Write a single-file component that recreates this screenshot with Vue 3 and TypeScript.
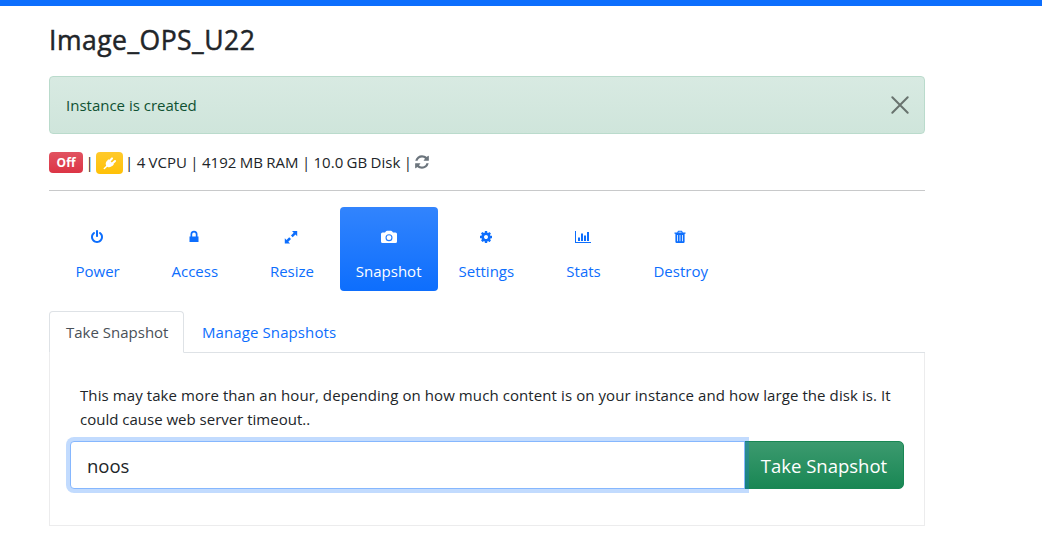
<script setup lang="ts">
import { ref } from 'vue'

interface Action {
  name: string
  icon: string
}

const actions: Action[] = [
  { name: 'Power', icon: 'power' },
  { name: 'Access', icon: 'lock' },
  { name: 'Resize', icon: 'resize' },
  { name: 'Snapshot', icon: 'camera' },
  { name: 'Settings', icon: 'cog' },
  { name: 'Stats', icon: 'chart' },
  { name: 'Destroy', icon: 'trash' },
]
const current = ref('Snapshot')
const snapshotName = ref('noos')
const showAlert = ref(true)
</script>

<template>
  <div class="topbar"></div>
  <main class="container">
    <h1>Image_OPS_U22</h1>

    <div v-if="showAlert" class="alert">
      <span class="alert-text">Instance is created</span>
      <button class="close" type="button" aria-label="Close" @click="showAlert = false">
        <svg width="16" height="16" viewBox="0 0 16 16"><path d="M.3.3l15.4 15.4M15.7.3L.3 15.7" stroke="#000" stroke-width="2" stroke-linecap="round" /></svg>
      </button>
    </div>

    <div class="status">
      <span class="badge off">Off</span>
      <span class="bar">|</span>
      <span class="badge plug">
        <svg width="14" height="14" viewBox="0 0 14 14" fill="#fff">
          <path d="M4.200 4.600l5.200 5.200c-1.500 1.500-3.500 1.900-5.200.9L1.600 13.200.7 12.900.6 12.200 3.200 9.700c-.9-1.600-.5-3.600 1-5.100z" />
          <path d="M5.500 5.900L9 2.400M8.300 8.600L12 5" stroke="#fff" stroke-width="2.100" stroke-linecap="round" />
          <path d="M4.200 4.600l1.300-1.300 5.300 5.300-1.400 1.300z" />
        </svg>
      </span>
      <span class="specs">| 4 VCPU | 4192 MB RAM | 10.0 GB Disk |</span>
      <svg class="refresh" width="16" height="16" viewBox="0 0 1792 1792" fill="#6c757d"><path d="M1639 1056q0 5-1 7-64 268-268 434.500t-478 166.500q-146 0-282.500-55t-243.500-157l-129 129q-19 19-45 19t-45-19-19-45v-448q0-26 19-45t45-19h448q26 0 45 19t19 45-19 45l-137 137q71 66 161 102t187 36q134 0 250-65t186-179q11-17 53-117 8-23 30-23h192q13 0 22.500 9.500t9.500 22.500zm25-800v448q0 26-19 45t-45 19h-448q-26 0-45-19t-19-45 19-45l138-138q-148-137-349-137-134 0-250 65t-186 179q-11 17-53 117-8 23-30 23h-199q-13 0-22.500-9.500t-9.500-22.500v-7q65-268 270-434.500t480-166.500q146 0 284 55.500t245 156.500l130-129q19-19 45-19t45 19 19 45z" /></svg>
    </div>

    <nav class="pills">
      <a v-for="a in actions" :key="a.name" class="pill" :class="[a.icon, { active: current === a.name }]" @click="current = a.name">
        <svg v-if="a.icon === 'power'" width="14" height="14" viewBox="0 0 1792 1792"><path d="M1664 896q0 156-61 298t-164 245-245 164-298 61-298-61-245-164-164-245-61-298q0-182 80.500-343t226.500-270q43-32 95.500-25t83.500 50q32 42 24.500 94.500t-49.500 84.500q-98 74-151.500 181t-53.500 228q0 104 40.500 198.500t109.500 163.500 163.500 109.500 198.500 40.500 198.500-40.500 163.500-109.500 109.500-163.500 40.500-198.500q0-121-53.500-228t-151.500-181q-42-32-49.500-84.500t24.500-94.500q31-43 84-50t95 25q146 109 226.500 270t80.500 343zm-640-768v640q0 52-38 90t-90 38-90-38-38-90v-640q0-52 38-90t90-38 90 38 38 90z" /></svg>
        <svg v-else-if="a.icon === 'lock'" width="14" height="14" viewBox="0 0 14 14"><path fill-rule="evenodd" d="M2.500 6.500V12h9V6.500h-1V4.200a3.500 3.500 0 0 0-7 0v2.300zM5.200 6.500V4.300a1.800 1.900 0 0 1 3.600 0v2.200z" /></svg>
        <svg v-else-if="a.icon === 'resize'" width="14" height="14" viewBox="0 0 14 14"><path d="M8 1h5.200v5.200L11.500 4.600 8.700 7.300 7 5.600 9.700 2.800zM6 13.500H.8V8.300l1.700 1.700 2.700-2.700L7 9 4.300 11.800z" /></svg>
        <svg v-else-if="a.icon === 'camera'" width="16" height="14" viewBox="0 0 16 14"><path fill-rule="evenodd" d="M1.500 2.500H4L5 1.200Q5.400.800 6 .8h4q.600 0 1 .4l1 1.300h2.500Q16 2.500 16 4v7.500Q16 13 14.500 13h-13Q0 13 0 11.500V4q0-1.500 1.500-1.500zM8 4.200a3.500 3.500 0 1 0 0 7 3.500 3.500 0 0 0 0-7zm0 1.100a2.400 2.400 0 1 1 0 4.800 2.400 2.400 0 0 1 0-4.800z" /></svg>
        <svg v-else-if="a.icon === 'cog'" width="14" height="14" viewBox="0 0 1792 1792"><path d="M1152 896q0-106-75-181t-181-75-181 75-75 181 75 181 181 75 181-75 75-181zm512-109v222q0 12-8 23t-20 13l-185 28q-19 54-39 91 35 50 107 138 10 12 10 25t-9 23q-27 37-99 108t-94 71q-12 0-26-9l-138-108q-44 23-91 38-16 136-29 186-7 28-36 28h-222q-14 0-24.500-8.500t-11.500-21.500l-28-184q-49-16-90-37l-141 107q-10 9-25 9-14 0-25-11-126-114-165-168-7-10-7-23 0-12 8-23 15-21 51-66.500t54-70.500q-27-50-41-99l-183-27q-13-2-21-12.500t-8-23.500v-222q0-12 8-23t19-13l186-28q14-46 39-92-40-57-107-138-10-12-10-24 0-10 9-23 26-36 98.500-107.500t94.500-71.500q13 0 26 10l138 107q44-23 91-38 16-136 29-186 7-28 36-28h222q14 0 24.500 8.500t11.500 21.500l28 184q49 16 90 37l142-107q9-9 24-9 13 0 25 10 129 119 165 170 7 8 7 22 0 12-8 23-15 21-51 66.500t-54 70.500q26 50 41 98l183 28q13 2 21 12.500t8 23.500z" /></svg>
        <svg v-else-if="a.icon === 'chart'" width="16" height="14" viewBox="0 0 16 14"><path d="M0 1h1v11h15v1H0zM3 7.500h2V11H3zM6 3.500h2V11H6zM9 5.500h2V11H9zM12 2h2v9h-2z" /></svg>
        <svg v-else width="14" height="14" viewBox="0 0 14 14"><path fill-rule="evenodd" d="M4.200 2.500l.7-1.500Q5 .8 5.300.8h3.400q.3 0 .4.200l.7 1.500h2.700v1.200h-.9v8q0 1.300-1.200 1.300H3.600q-1.200 0-1.200-1.300v-8h-.9V2.500zM5.300 2.500h3.400l-.4-.7H5.700zM4.200 5v6.300h.8V5zM6.600 5v6.300h.8V5zM9 5v6.300h.8V5z" /></svg>
        <span>{{ a.name }}</span>
      </a>
    </nav>

    <div class="tabs">
      <a class="tab selected">Take Snapshot</a>
      <a class="tab manage">Manage Snapshots</a>
    </div>
    <section class="panel">
      <p><span class="line1">This may take more than an hour, depending on how much content is on your instance and how large the disk is. It</span><br /><span class="line2">could cause web server timeout..</span></p>
      <div class="group">
        <input v-model="snapshotName" type="text" aria-label="Snapshot Name" spellcheck="false" />
        <button type="button" class="take"><span>Take Snapshot</span></button>
      </div>
    </section>
  </main>
</template>

<style>
body { background: #fff; overflow: hidden; }
</style>

<style scoped>
* { box-sizing: border-box; }
.topbar { height: 6px; background: #0d6efd; }
.container { margin-left: 49px; width: 876px; font: 15px/24px "Segoe UI", "Open Sans", sans-serif; color: #212529; }
h1 { margin: 0; padding-top: 17px; height: 70px; font-size: 26.500px; line-height: 34px; font-weight: 500; letter-spacing: .5px; -webkit-text-stroke: .5px #212529; }
.alert { height: 58px; padding: 0 16px; display: flex; align-items: center; justify-content: space-between; border: 1px solid #badbcc; border-radius: 4px; color: #0f5132; background: linear-gradient(#d8eae2, #cfe5db); }
.close { display: flex; padding: 0; border: 0; background: none; opacity: .5; }
.close svg { overflow: visible; }
.status { height: 57px; border-bottom: 1px solid #c8c9ca; display: flex; align-items: flex-start; padding-top: 16px; white-space: pre; }
.badge { height: 21px; margin-top: 2px; border-radius: 4px; color: #fff; display: flex; align-items: center; justify-content: center; }
.off { width: 34px; padding-top: 1px; font-size: 12px; font-weight: 700; background: linear-gradient(#e15361, #dc3545); }
.bar { width: 13px; text-align: center; }
.plug { width: 27px; height: 22px; background: linear-gradient(#ffca2c, #ffc107); }
.specs { flex: none; margin-left: 2px; width: 288px; word-spacing: -.500px; }
.refresh { flex: none; margin: 4px 0 0 1px; }
.pills { margin-top: 16px; display: grid; grid-template-columns: repeat(7, 97.200px); height: 84px; }
.pill { display: flex; flex-direction: column; align-items: center; padding-top: 23px; color: #0d6efd; fill: currentColor; border-radius: 4px; }
.pill span { margin-top: 15px; line-height: 24px; white-space: nowrap; }
.power svg, .lock svg, .trash svg, .resize svg { margin-right: 1px; }
.chart svg { margin-right: 2px; }
.pill.active { margin-left: -1px; color: #fff; background: linear-gradient(#3284fd, #0d6efd); }
.tabs { margin-top: 20px; display: flex; height: 42px; border-bottom: 1px solid #dee2e6; white-space: nowrap; }
.tab { height: 42px; padding: 8px 16px; border: 1px solid transparent; border-radius: 4px 4px 0 0; color: #0d6efd; }
.selected { width: 135px; color: #495057; border-color: #dee2e6 #dee2e6 #fff; background: #fff; }
.manage { padding-left: 17px; letter-spacing: .1px; }
.panel { height: 173px; padding: 30px 20px 0; border: 1px solid #ececed; border-top: 0; }
p { margin: 0 0 10px; padding-left: 10px; white-space: nowrap; letter-spacing: .09px; }
.line2 { letter-spacing: 0; }
.group { display: flex; height: 48px; }
input { width: 675px; height: 48px; padding: 0 16px; border: 1px solid #86b7fe; border-radius: 4px 0 0 4px; outline: 0; box-shadow: 0 0 0 4px rgba(13, 110, 253, .25); position: relative; z-index: 1; color: #212529; font: 18.500px "Segoe UI", "Open Sans", sans-serif; background: #fff; }
.take { margin-left: -1px; width: 160px; padding: 0; border: 1px solid #198754; border-radius: 0 5px 5px 0; color: #fff; font: 18.500px "Segoe UI", "Open Sans", sans-serif; background: linear-gradient(#3c9a6f, #198754); white-space: nowrap; }
</style>
